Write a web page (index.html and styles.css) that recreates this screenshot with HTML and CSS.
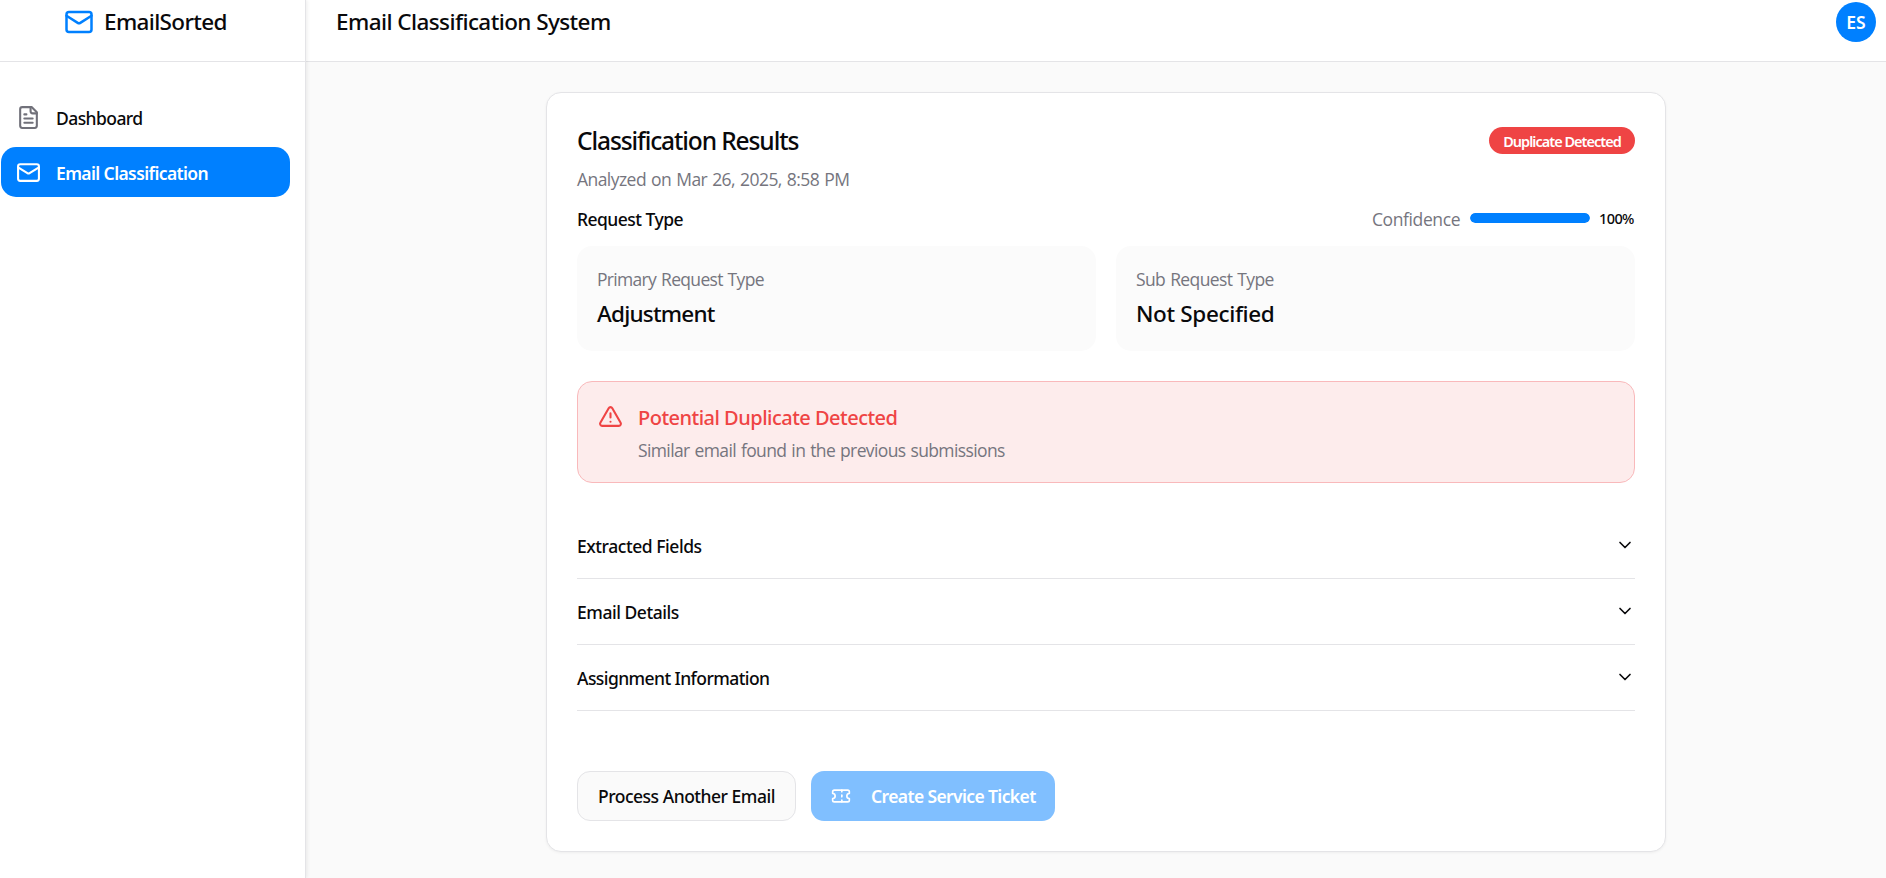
FILE: index.html
```html
<!DOCTYPE html>
<html lang="en">
<head>
<meta charset="utf-8">
<title>EmailSorted</title>
<link rel="stylesheet" href="styles.css">
</head>
<body>
<div class="app">
  <aside class="sidebar">
    <div class="brand">
      <svg class="icon icon-brand" viewBox="0 0 24 24"><rect width="20" height="16" x="2" y="4" rx="2"/><path d="m22 7-8.97 5.7a1.94 1.94 0 0 1-2.06 0L2 7"/></svg>
      <span class="brand-name">EmailSorted</span>
    </div>
    <nav class="nav">
      <a class="nav-item">
        <svg class="icon icon-nav" viewBox="0 0 24 24"><path d="M15 2H6a2 2 0 0 0-2 2v16a2 2 0 0 0 2 2h12a2 2 0 0 0 2-2V7Z"/><path d="M14 2v4a2 2 0 0 0 2 2h4"/><path d="M10 9H8"/><path d="M16 13H8"/><path d="M16 17H8"/></svg>
        <span class="nav-dashboard">Dashboard</span>
      </a>
      <a class="nav-item active">
        <svg class="icon icon-nav" viewBox="0 0 24 24"><rect width="20" height="16" x="2" y="4" rx="2"/><path d="m22 7-8.97 5.7a1.94 1.94 0 0 1-2.06 0L2 7"/></svg>
        <span class="nav-email">Email Classification</span>
      </a>
    </nav>
  </aside>
  <div class="main">
    <header class="topbar">
      <h1 class="page-title">Email Classification System</h1>
      <div class="avatar">ES</div>
    </header>
    <main class="content">
      <section class="card">
        <div class="card-head">
          <h2 class="card-title">Classification Results</h2>
          <span class="badge">Duplicate Detected</span>
        </div>
        <p class="analyzed">Analyzed on Mar 26, 2025, 8:58 PM</p>
        <div class="request-row">
          <h3 class="request-title">Request Type</h3>
          <div class="confidence">
            <span class="confidence-label">Confidence</span>
            <div class="meter"><div class="meter-fill" style="width:100%"></div></div>
            <span class="percent">100%</span>
          </div>
        </div>
        <div class="types">
          <div class="type">
            <p class="type-label primary">Primary Request Type</p>
            <p class="type-value adjustment">Adjustment</p>
          </div>
          <div class="type">
            <p class="type-label">Sub Request Type</p>
            <p class="type-value">Not Specified</p>
          </div>
        </div>
        <div class="alert">
          <svg class="icon icon-alert" viewBox="0 0 24 24"><path d="m21.73 18-8-14a2 2 0 0 0-3.48 0l-8 14A2 2 0 0 0 4 21h16a2 2 0 0 0 1.73-3"/><path d="M12 9v4"/><path d="M12 17h.01"/></svg>
          <div>
            <h4 class="alert-title">Potential Duplicate Detected</h4>
            <p class="alert-text">Similar email found in the previous submissions</p>
          </div>
        </div>
        <div class="accordion">
          <div class="fold"><span class="fold-fields">Extracted Fields</span><svg class="icon icon-chevron" viewBox="0 0 24 24"><path d="m6 9 6 6 6-6"/></svg></div>
          <div class="fold"><span class="fold-details">Email Details</span><svg class="icon icon-chevron" viewBox="0 0 24 24"><path d="m6 9 6 6 6-6"/></svg></div>
          <div class="fold"><span class="fold-assign">Assignment Information</span><svg class="icon icon-chevron" viewBox="0 0 24 24"><path d="m6 9 6 6 6-6"/></svg></div>
        </div>
        <div class="actions">
          <button class="btn btn-outline"><span>Process Another Email</span></button>
          <button class="btn btn-primary" disabled>
            <svg class="icon icon-ticket" viewBox="0 0 24 24"><path d="M2 9a3 3 0 0 1 0 6v2a2 2 0 0 0 2 2h16a2 2 0 0 0 2-2v-2a3 3 0 0 1 0-6V7a2 2 0 0 0-2-2H4a2 2 0 0 0-2 2Z"/><path d="M13 5v2"/><path d="M13 17v2"/><path d="M13 11v2"/></svg>
            <span>Create Service Ticket</span>
          </button>
        </div>
      </section>
    </main>
  </div>
</div>
</body>
</html>
```
FILE: styles.css
```css
* { box-sizing: border-box; }

body, h1, h2, h3, h4, p { margin: 0; }

body {
  height: 878px;
  overflow: hidden;
  background: #fafafa;
  color: #09090b;
  font: 500 17.5px/26px "Noto Sans", "Open Sans", sans-serif;
  white-space: nowrap;
}

.app { display: flex; height: 878px; }

.icon {
  flex: none;
  fill: none;
  stroke: currentColor;
  stroke-width: 2;
  stroke-linecap: round;
  stroke-linejoin: round;
}

/* Sidebar */
.sidebar {
  z-index: 1;
  flex: none;
  width: 306px;
  background: #fff;
  border-right: 1px solid #e4e4e7;
  box-shadow: 1px 0 4px rgba(0, 0, 0, 0.08);
}
.brand {
  display: flex;
  align-items: center;
  gap: 10px;
  height: 62px;
  padding: 0 0 17px 64px;
  border-bottom: 1px solid #e4e4e7;
}
.icon-brand { width: 30px; height: 30px; color: #0080ff; }
.brand-name { font-size: 22.5px; letter-spacing: -0.65px; }
.nav { padding: 30px 15px 0 1px; }
.nav-item {
  display: flex;
  align-items: center;
  gap: 15px;
  height: 50px;
  padding-left: 15px;
  border-radius: 15px;
}
.nav-item + .nav-item { margin-top: 5px; }
.nav-item span { padding-top: 1px; }
.icon-nav { width: 25px; height: 25px; color: #71717a; }
.nav-dashboard { letter-spacing: -0.57px; }
.nav-email { font-weight: 600; letter-spacing: -0.61px; }
.active { background: #0080ff; color: #fff; }
.active .icon-nav { color: #fff; }

/* Top bar */
.main { flex: 1; min-width: 0; }
.topbar {
  display: flex;
  align-items: center;
  justify-content: space-between;
  height: 62px;
  padding: 0 10px 17px 30px;
  background: #fff;
  border-bottom: 1px solid #e4e4e7;
}
.page-title { font-size: 22.5px; font-weight: 500; letter-spacing: -0.58px; }
.avatar {
  width: 40px;
  height: 40px;
  border-radius: 50%;
  background: #0080ff;
  color: #fff;
  font-weight: 600;
  line-height: 41px;
  text-align: center;
}

/* Results card */
.content { padding: 30px 220px 0 240px; }
.card {
  height: 760px;
  padding: 30px;
  background: #fff;
  border: 1px solid #e4e4e7;
  border-radius: 15px;
  box-shadow: 0 1px 3px rgba(0, 0, 0, 0.05);
}
.card-head {
  display: flex;
  align-items: center;
  justify-content: space-between;
  height: 36px;
}
.card-title { font-size: 24.5px; font-weight: 500; letter-spacing: -1.1px; }
.badge {
  width: 146px;
  height: 27px;
  margin-bottom: 1px;
  border-radius: 14px;
  background: #ef4444;
  color: #fff;
  font-size: 14.5px;
  font-weight: 600;
  line-height: 28px;
  letter-spacing: -0.98px;
  text-align: center;
}
.analyzed,
.confidence-label,
.type-label,
.alert-text {
  color: #75757e;
  font-family: "Open Sans", "Noto Sans", sans-serif;
  font-weight: 400;
}
.analyzed { margin-top: 7px; letter-spacing: -0.55px; word-spacing: 1px; }
.request-row {
  display: flex;
  justify-content: space-between;
  height: 26px;
  margin-top: 14px;
}
.request-title { font-size: 17.5px; font-weight: 500; letter-spacing: -0.53px; }
.confidence { display: flex; }
.confidence-label { width: 98px; letter-spacing: -0.4px; }
.meter {
  width: 120px;
  height: 10px;
  margin: 7px 9px 0 0;
  border-radius: 5px;
  background: #f4f4f5;
  overflow: hidden;
}
.meter-fill { height: 100%; border-radius: 5px; background: #0080ff; }
.percent { width: 36px; font-size: 14.5px; line-height: 24px; letter-spacing: -0.6px; }

.types {
  display: grid;
  grid-template-columns: 1fr 1fr;
  gap: 20px;
  margin-top: 14px;
}
.type { height: 105px; padding: 20px; border-radius: 15px; background: #fbfbfb; }
.type-label { letter-spacing: -0.61px; word-spacing: 1px; }
.type-label.primary { letter-spacing: -0.68px; }
.type-value {
  margin-top: 5px;
  font-size: 22.5px;
  line-height: 34px;
  letter-spacing: -0.35px;
}
.type-value.adjustment { letter-spacing: -0.78px; }

.alert {
  display: flex;
  gap: 15px;
  height: 102px;
  margin-top: 30px;
  padding: 20px;
  border: 1px solid #f9b9bb;
  border-radius: 15px;
  background: #fdecec;
}
.icon-alert { width: 25px; height: 25px; margin-top: 2px; color: #ef4444; }
.alert-title {
  color: #ef4444;
  font-size: 20px;
  font-weight: 500;
  line-height: 31px;
  letter-spacing: -0.51px;
}
.alert-text { margin-top: 4px; letter-spacing: -0.62px; word-spacing: 1px; }

.accordion { margin-top: 30px; }
.fold {
  display: flex;
  align-items: center;
  justify-content: space-between;
  height: 66px;
  border-bottom: 1px solid #e4e4e7;
}
.fold span { padding-top: 1px; }
.fold-fields { letter-spacing: -0.45px; }
.fold-details { letter-spacing: -0.47px; }
.fold-assign { letter-spacing: -0.57px; }
.icon-chevron { width: 20px; height: 20px; margin-bottom: 1px; }

.actions { display: flex; gap: 15px; margin-top: 60px; }
.btn {
  display: flex;
  align-items: center;
  height: 50px;
  border: 0;
  border-radius: 13px;
  font: inherit;
}
.btn-outline {
  width: 219px;
  padding: 0 0 0 20px;
  border: 1px solid #e4e4e7;
  background: #fafafa;
  color: #09090b;
  letter-spacing: -0.49px;
}
.btn-primary {
  gap: 20px;
  width: 244px;
  padding: 0 0 0 20px;
  background: #80bfff;
  color: #fff;
  font-weight: 600;
  letter-spacing: -0.62px;
}
.icon-ticket { width: 20px; height: 20px; }
```
